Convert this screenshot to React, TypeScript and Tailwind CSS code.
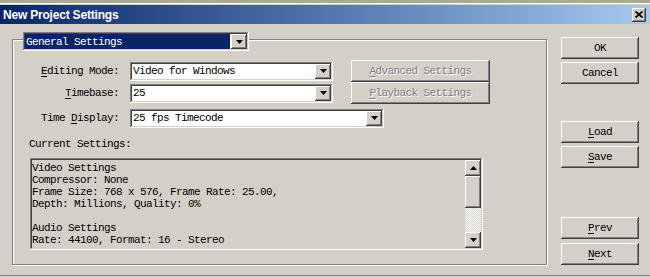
import type { ReactNode } from "react";

const raised =
  "shadow-[inset_-1px_-1px_#404040,inset_1px_1px_#ffffff,inset_-2px_-2px_#808080,inset_2px_2px_#d4d0c8]";
const sunken =
  "shadow-[inset_-1px_-1px_#ffffff,inset_1px_1px_#808080,inset_-2px_-2px_#d4d0c8,inset_2px_2px_#404040]";

const Arrow = ({ up }: { up?: boolean }) => (
  <svg width="7" height="4" viewBox="0 0 7 4">
    {up ? <path d="M3.5 0 L7 4 L0 4 Z" fill="#000" /> : <path d="M0 0 L7 0 L3.5 4 Z" fill="#000" />}
  </svg>
);

const DropButton = () => (
  <div className={`w-[16px] h-full bg-[#d4d0c8] flex items-center justify-center ${raised}`}>
    <Arrow />
  </div>
);

const Select = ({ value, width }: { value: string; width: string }) => (
  <div className={`${width} h-[19px] bg-white p-[2px] flex ${sunken}`}>
    <div className="flex-1 pl-[1px] flex items-center text-black whitespace-pre">{value}</div>
    <DropButton />
  </div>
);

const Label = ({ u, rest, pre }: { u: string; rest: string; pre?: string }) => (
  <span className="whitespace-pre">
    {pre}
    <u className="underline-offset-2">{u}</u>
    {rest}
  </span>
);

const Button = ({ children, disabled, className }: { children: ReactNode; disabled?: boolean; className?: string }) => (
  <div
    className={`h-[22px] bg-[#d4d0c8] flex items-center justify-center ${raised} ${
      disabled ? "text-[#808080] [text-shadow:1px_1px_0_#ffffff]" : "text-black"
    } ${className ?? ""}`}
  >
    {children}
  </div>
);

const lines = [
  "Video Settings",
  "Compressor: None",
  "Frame Size: 768 x 576, Frame Rate: 25.00,",
  "Depth: Millions, Quality: 0%",
  "",
  "Audio Settings",
  "Rate: 44100, Format: 16 - Stereo",
];

export default function App() {
  return (
    <div className="w-[650px] h-[278px] bg-[#d4d0c8] overflow-hidden flex flex-col text-[11px] leading-[12px] tracking-[-0.6px] [font-family:'Liberation_Mono',monospace]">
      {/* window frame top */}
      <div className="h-[3px] bg-[#a9a7a1]" />
      <div className="h-px bg-white" />
      <div className="h-px bg-[#d4d0c8]" />

      {/* title bar */}
      <div className="h-[19px] flex items-center justify-between bg-gradient-to-r from-[#0a246a] to-[#a6caf0] pl-[3px] pr-[4px]">
        <span className="text-white font-bold text-[12px] tracking-[-0.2px] [font-family:'Liberation_Sans',Arial,sans-serif]">
          New Project Settings
        </span>
        <div className={`w-[14px] h-[14px] bg-[#d4d0c8] flex items-center justify-center ${raised}`}>
          <svg width="8" height="7" viewBox="0 0 8 7">
            <path d="M0.5 0.5 L7.5 6.5 M7.5 0.5 L0.5 6.5" stroke="#000" strokeWidth="1.8" />
          </svg>
        </div>
      </div>

      <div className="flex flex-1">
        {/* group box */}
        <div className="relative ml-[12px] mt-[15px] w-[535px] h-[226px] border border-[#808080] shadow-[1px_1px_0_#ffffff,inset_1px_1px_0_#ffffff]">
          <div className={`absolute left-[10px] top-[-8px] w-[226px] h-[19px] bg-white p-[2px] flex ${sunken}`}>
            <div className="flex-1 bg-[#0a246a] text-white flex items-center pl-[1px] mr-[1px]">General Settings</div>
            <DropButton />
          </div>

          <div className="flex flex-col pt-[21px]">
            <div className="flex items-center h-[20px]">
              <div className="w-[106px] text-right text-black">
                <Label u="E" rest="diting Mode:" />
              </div>
              <div className="ml-[11px]">
                <Select value="Video for Windows" width="w-[203px]" />
              </div>
              <Button disabled className="ml-[18px] w-[139px] h-[20px]">
                <Label u="A" rest="dvanced Settings" />
              </Button>
            </div>

            <div className="flex items-center h-[20px] mt-[2px]">
              <div className="w-[106px] text-right text-black">
                <Label u="T" rest="imebase:" />
              </div>
              <div className="ml-[11px]">
                <Select value="25" width="w-[203px]" />
              </div>
              <Button disabled className="ml-[18px] w-[139px] h-[20px]">
                <Label u="P" rest="layback Settings" />
              </Button>
            </div>

            <div className="flex items-center h-[20px] mt-[5px]">
              <div className="w-[106px] text-right text-black">
                <Label pre="Time " u="D" rest="isplay:" />
              </div>
              <div className="ml-[11px]">
                <Select value="25 fps Timecode" width="w-[254px]" />
              </div>
            </div>

            <div className="ml-[16px] mt-[10px] h-[12px] text-black">Current Settings:</div>

            <div className={`ml-[17px] mt-[8px] w-[453px] h-[92px] p-[2px] flex ${sunken}`}>
              <div className="flex-1 pt-[2px] text-black whitespace-pre">
                {lines.map((l, i) => (
                  <div key={i} className="h-[12px]">{l}</div>
                ))}
              </div>
              {/* scrollbar */}
              <div className="w-[16px] flex flex-col">
                <div className={`h-[16px] bg-[#d4d0c8] flex items-center justify-center ${raised}`}>
                  <Arrow up />
                </div>
                <div className={`h-[32px] bg-[#d4d0c8] ${raised}`} />
                <div className="flex-1 bg-[repeating-conic-gradient(#d4d0c8_0_25%,#ffffff_0_50%)] bg-[length:2px_2px]" />
                <div className={`h-[16px] bg-[#d4d0c8] flex items-center justify-center ${raised}`}>
                  <Arrow />
                </div>
              </div>
            </div>
          </div>
        </div>

        {/* right buttons */}
        <div className="ml-[14px] mt-[13px] w-[78px] flex flex-col">
          <Button>OK</Button>
          <Button className="mt-[3px]">Cancel</Button>
          <Button className="mt-[37px]">
            <Label u="L" rest="oad" />
          </Button>
          <Button className="mt-[3px]">
            <Label u="S" rest="ave" />
          </Button>
          <Button className="mt-[49px]">
            <Label u="P" rest="rev" />
          </Button>
          <Button className="mt-[4px]">
            <Label u="N" rest="ext" />
          </Button>
        </div>
      </div>

      {/* window frame bottom */}
      <div className="h-px bg-[#808080]" />
      <div className="h-[2px] bg-[#d4d0c8]" />
    </div>
  );
}
